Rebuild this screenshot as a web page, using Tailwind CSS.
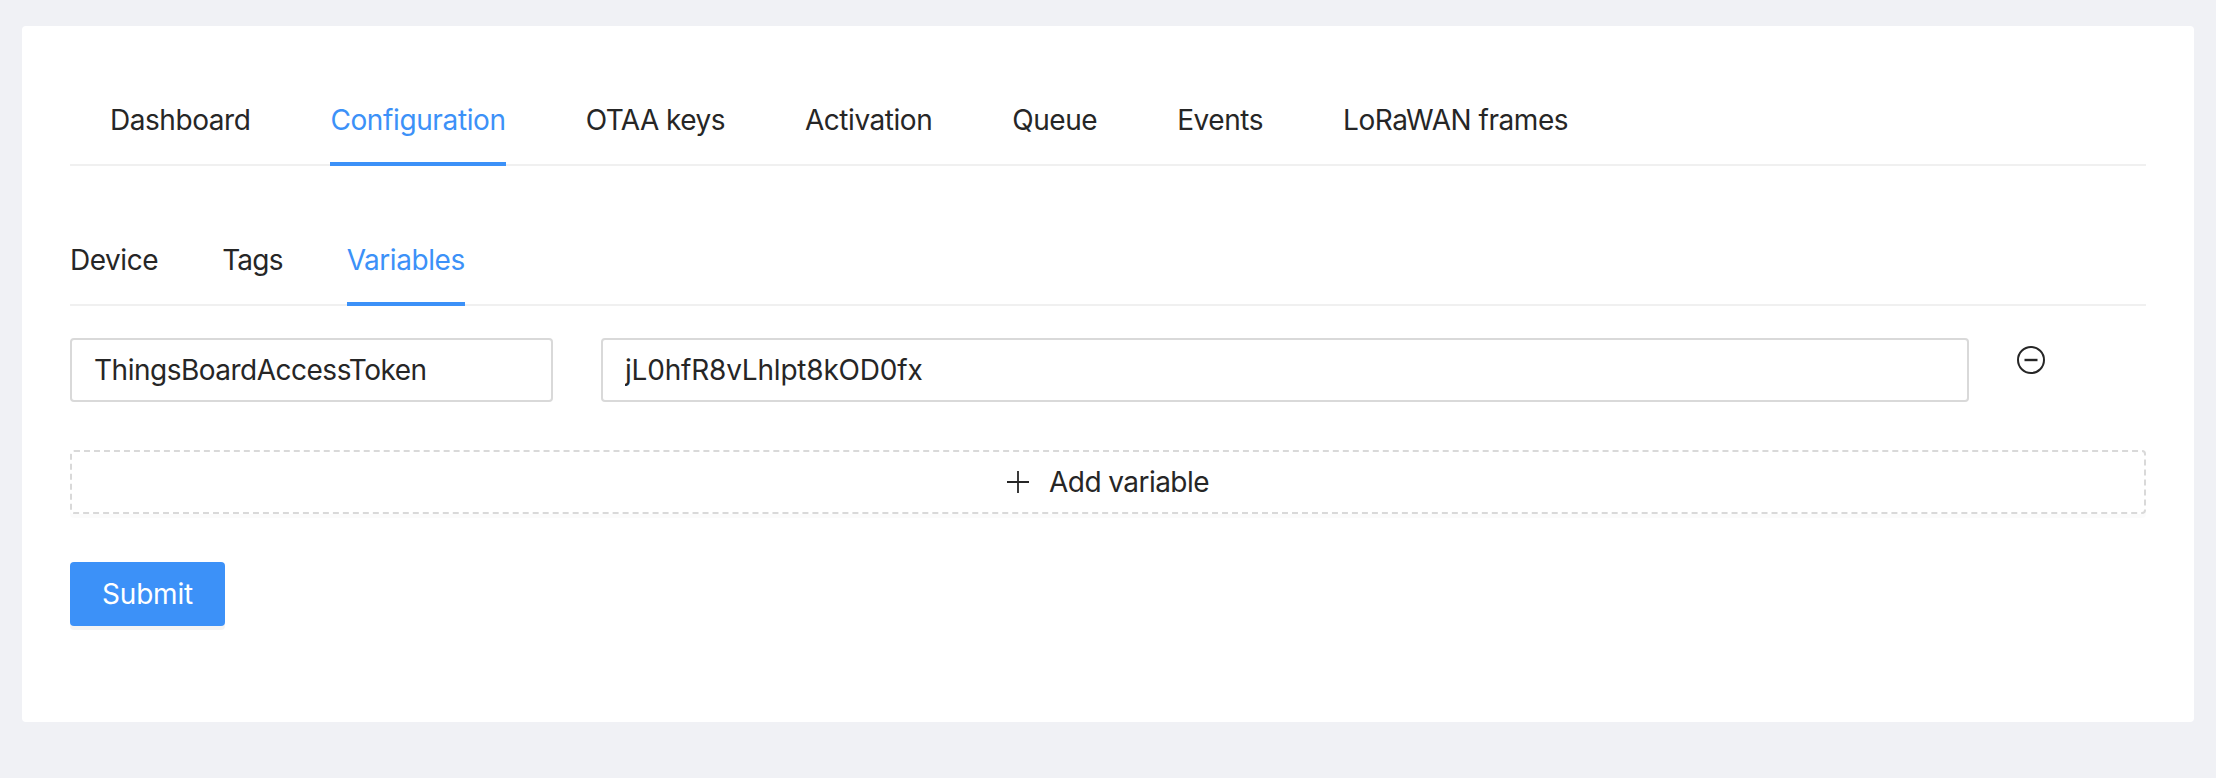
<!DOCTYPE html>
<html lang="en">
<head>
    <meta charset="UTF-8">
    <title>Device configuration</title>
    <script src="https://cdn.jsdelivr.net/npm/@tailwindcss/browser@4"></script>
</head>
<body class="bg-[#f0f1f5] font-['Inter',sans-serif] text-[28px] leading-[44px] text-[#262626]">
    <div class="pt-[26px] px-[22px] h-[778px]">
        <div class="bg-white rounded-[4px] h-[696px] p-[48px]">
            <!-- main tabs -->
            <div class="flex gap-[80px] pl-[40px] border-b-2 border-[#f0f0f0] h-[92px] tracking-[-0.45px]">
                <div class="py-[24px]">Dashboard</div>
                <div class="py-[24px] h-[92px] text-[#3c91f8] border-b-4 border-[#3c91f8] tracking-[-0.38px]">Configuration</div>
                <div class="py-[24px] tracking-[-0.55px]">OTAA keys</div>
                <div class="py-[24px]">Activation</div>
                <div class="py-[24px]">Queue</div>
                <div class="py-[24px]">Events</div>
                <div class="py-[24px]">LoRaWAN frames</div>
            </div>
            <!-- sub tabs -->
            <div class="flex gap-[64px] border-b-2 border-[#f0f0f0] h-[92px] mt-[48px] tracking-[-0.45px]">
                <div class="py-[24px]">Device</div>
                <div class="py-[24px] tracking-[-0.8px]">Tags</div>
                <div class="py-[24px] h-[92px] text-[#3c91f8] border-b-4 border-[#3c91f8]">Variables</div>
            </div>
            <!-- variable row -->
            <div class="flex mt-[32px] h-[64px]">
                <input value="ThingsBoardAccessToken" class="w-[483px] h-[64px] px-[22px] border-2 border-[#d9d9d9] rounded-[4px] outline-none tracking-[-0.5px]">
                <input value="jL0hfR8vLhlpt8kOD0fx" class="w-[1368px] h-[64px] ml-[48px] px-[22px] border-2 border-[#d9d9d9] rounded-[4px] outline-none tracking-[-0.2px]">
                <svg class="ml-[48px] mt-[8px]" width="28" height="28" viewBox="0 0 28 28" fill="none" stroke="#262626" stroke-width="2">
                    <circle cx="14" cy="14" r="13"/>
                    <path d="M7.5 14h13" stroke-width="2.4"/>
                </svg>
            </div>
            <button class="flex items-center justify-center gap-[20px] w-full h-[64px] mt-[48px] border-2 border-dashed border-[#d9d9d9] rounded-[4px] shadow-[0_4px_0_rgba(0,0,0,0.015)] tracking-[-0.55px]">
                <svg width="22" height="22" viewBox="0 0 22 22" fill="none" stroke="#262626" stroke-width="1.8"><path d="M11 0v22M0 11h22"/></svg>
                <span>Add variable</span>
            </button>
            <button class="block w-[155px] h-[64px] mt-[48px] bg-[#3c91f8] text-white rounded-[4px] shadow-[0_4px_0_rgba(0,0,0,0.045)] tracking-[-0.2px]">Submit</button>
        </div>
    </div>
</body>
</html>
